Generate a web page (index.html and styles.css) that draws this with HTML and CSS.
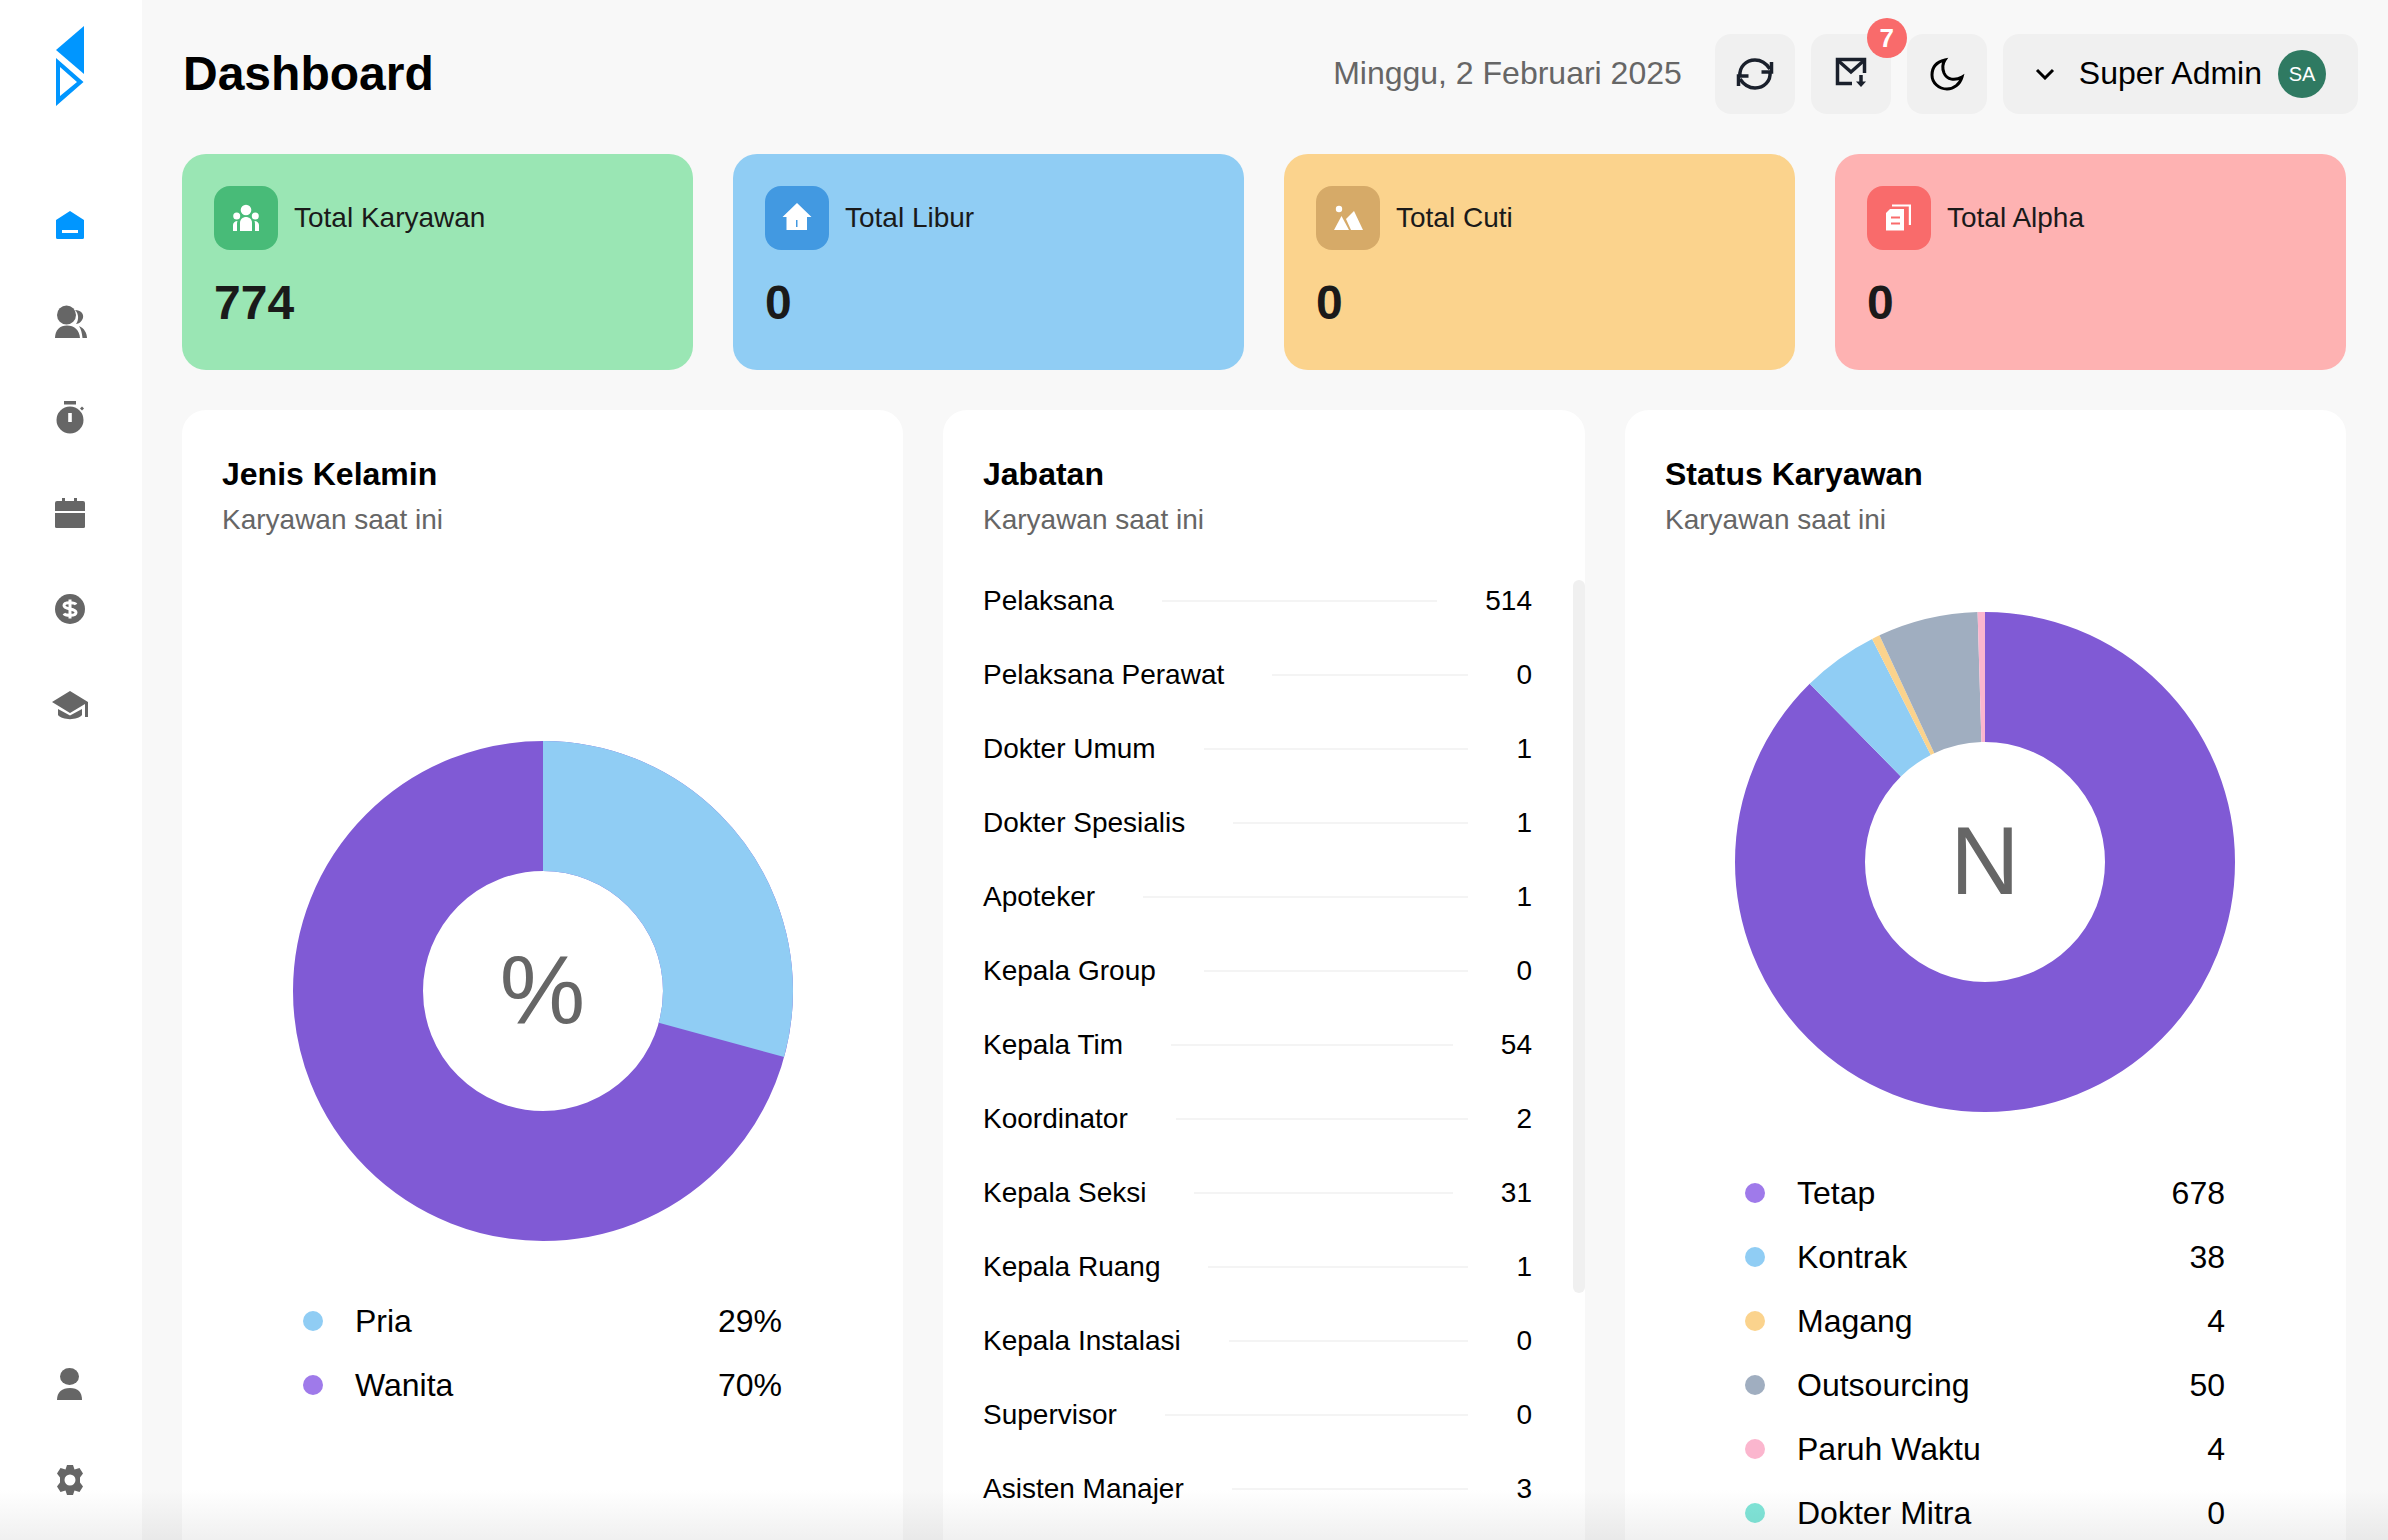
FILE: index.html
```html
<!DOCTYPE html>
<html lang="en">
  <head>
    <meta charset="UTF-8" />
    <meta name="viewport" content="width=device-width, initial-scale=1.0" />
    <title>Dashboard</title>
    <link rel="stylesheet" href="styles.css">
  </head>
  <body>
    <aside class="sidebar">
      <svg class="logo" viewBox="0 0 40 80">
        <path class="logo-fill" d="M34 0V48L6 24Z" />
        <path class="logo-fill" fill-rule="evenodd" d="M6 32L33.5 56 6 80ZM10 41V70L27 56Z" />
      </svg>

      <nav class="nav">
        <a class="nav-item">
          <svg class="nav-icon active" viewBox="0 0 40 40">
            <path fill-rule="evenodd" d="M20 6L34 15V32.5A1.5 1.5 0 0 1 32.5 34H7.5A1.5 1.5 0 0 1 6 32.5V15ZM12 25V28H28V25Z" />
          </svg>
        </a>
        <a class="nav-item">
          <svg class="nav-icon" viewBox="0 0 40 40">
            <ellipse cx="16.5" cy="14" rx="9.5" ry="9.5" />
            <path d="M5 37C5 29 10 24.5 17 24.5C24 24.5 29.5 29 30 37Z" />
            <path d="M25 9C31 9 34 13 33 17C32 20 29 23 26 23C29 19 29 13 25 9Z" />
            <path d="M29 25C34 27 37 32 37 37H32.5C32 32 31 28 29 25Z" />
          </svg>
        </a>
        <a class="nav-item">
          <svg class="nav-icon" viewBox="0 0 40 40">
            <path fill-rule="evenodd" d="M20 9.5A13.5 13.5 0 1 1 20 36.5A13.5 13.5 0 1 1 20 9.5ZM18.2 16V25H21.8V16Z" />
            <rect x="14" y="4" width="12" height="3.5" />
            <path d="M30 11.5L32 9.5 34 11.5 32 13.5Z" />
          </svg>
        </a>
        <a class="nav-item">
          <svg class="nav-icon" viewBox="0 0 40 40">
            <path d="M5 10A2 2 0 0 1 7 8H12V5H15V8H24V5H27V8H33A2 2 0 0 1 35 10V18H5Z" />
            <path d="M5 20H35V33.5A1.5 1.5 0 0 1 33.5 35H6.5A1.5 1.5 0 0 1 5 33.5Z" />
          </svg>
        </a>
        <a class="nav-item">
          <svg class="nav-icon" viewBox="0 0 40 40">
            <circle cx="20" cy="20" r="15" />
            <path class="cut" d="M26 15.5C25 13.5 14 12.5 14 16.5C14 21 26 19 26 23.5C26 27.5 15 26.5 14 24.5" />
            <path class="cut" d="M20 10.5V29.5" />
          </svg>
        </a>
        <a class="nav-item">
          <svg class="nav-icon" viewBox="0 0 40 40">
            <path d="M2 17L20 6 38 17V32H35V19L20 28Z" />
            <path d="M8 24L20 30.5 32 24V30C28 35.5 12 35.5 8 30Z" />
          </svg>
        </a>
      </nav>

      <div class="nav nav-bottom">
        <a class="nav-item">
          <svg class="nav-icon" viewBox="0 0 40 40">
            <ellipse cx="19.5" cy="12.5" rx="9.5" ry="8.5" />
            <path d="M7 36C7 28 12 24 20 24C28 24 32 28 32 36Z" />
          </svg>
        </a>
        <a class="nav-item">
          <svg class="nav-icon" viewBox="0 0 40 40">
            <path fill-rule="evenodd" d="M17 5H23L24.5 9.5L29.5 8L33 13.5L30 17.5V22.5L33 26.5L29.5 32L24.5 30.5L23 35H17L15.5 30.5L10.5 32L7 26.5L10 22.5V17.5L7 13.5L10.5 8L15.5 9.5ZM20 14.5A5.5 5.5 0 1 0 20 25.5A5.5 5.5 0 1 0 20 14.5Z" />
          </svg>
        </a>
      </div>
    </aside>

    <main class="main">
      <header class="topbar">
        <h1>Dashboard</h1>
        <div class="topbar-right">
          <span class="today">Minggu, 2 Februari 2025</span>
          <button class="icon-btn">
            <svg viewBox="0 0 40 40" class="line-icon">
              <path d="M5 22C4 13 11 6 20 6C26 6 31 9 35 15" />
              <path d="M36.5 8V18H26.5" />
              <path d="M35 18C36 27 29 34 20 34C14 34 9 31 5 25" />
              <path d="M3.5 32V22H13.5" />
            </svg>
          </button>
          <button class="icon-btn">
            <svg viewBox="0 0 40 40" class="line-icon">
              <path d="M21 29.5H6.5V5.5H33.5V19" />
              <path d="M6.5 6L20 18 33.5 6" />
              <path d="M30 21V29" />
              <path class="solid" d="M25 27.5H35L30 33Z" />
            </svg>
            <span class="badge">7</span>
          </button>
          <button class="icon-btn">
            <svg viewBox="0 0 40 40" class="line-icon moon">
              <path d="M18 6C9 8 5 14 5 21C5 29 12 35 20 35C27 35 33 30 35 23C28 27 20 26 17 19C15 14 16 9 18 6Z" />
            </svg>
          </button>
          <button class="user-btn">
            <svg viewBox="0 0 20 12" class="chevron">
              <path d="M2 2L10 10 18 2" />
            </svg>
            <span class="user-name">Super Admin</span>
            <span class="avatar">SA</span>
          </button>
        </div>
      </header>

      <section class="stats">
        <div class="stat stat-green">
          <div class="stat-head">
            <span class="stat-icon">
              <svg viewBox="0 0 32 32">
                <circle cx="16" cy="8" r="5.3" />
                <circle cx="6.7" cy="14" r="3.5" />
                <circle cx="25.3" cy="14" r="3.5" />
                <path d="M10 29V21C10 17 13 15 16 15C19 15 22 17 22 21V29Z" />
                <path d="M3 29V23C3 21 5 19 7.5 19C7 20 7 22 7 23V29Z" />
                <path d="M29 29V23C29 21 27 19 24.5 19C25 20 25 22 25 23V29Z" />
              </svg>
            </span>
            <span class="stat-label">Total Karyawan</span>
          </div>
          <div class="stat-value">774</div>
        </div>
        <div class="stat stat-blue">
          <div class="stat-head">
            <span class="stat-icon">
              <svg viewBox="0 0 32 32">
                <path fill-rule="evenodd" d="M16 1L30.5 15H26V28H5.5V15H1.5ZM15 18V25H16.5V18Z" />
              </svg>
            </span>
            <span class="stat-label">Total Libur</span>
          </div>
          <div class="stat-value">0</div>
        </div>
        <div class="stat stat-orange">
          <div class="stat-head">
            <span class="stat-icon">
              <svg viewBox="0 0 32 32">
                <circle cx="7" cy="7" r="3.2" />
                <path d="M9.5 14L17 28H2Z" />
                <path d="M22 9L31 28H19L14 17Z" />
              </svg>
            </span>
            <span class="stat-label">Total Cuti</span>
          </div>
          <div class="stat-value">0</div>
        </div>
        <div class="stat stat-red">
          <div class="stat-head">
            <span class="stat-icon">
              <svg viewBox="0 0 32 32">
                <path fill-rule="evenodd" d="M3 11L7 7H21V28.5H3ZM8 14.5V16.5H17V14.5ZM8 20.5V22.5H17V20.5Z" />
                <path d="M9 2.5H28V23H25.8V4.5H9Z" />
              </svg>
            </span>
            <span class="stat-label">Total Alpha</span>
          </div>
          <div class="stat-value">0</div>
        </div>
      </section>

      <section class="panels">
        <div class="panel">
          <h2>Jenis Kelamin</h2>
          <p class="panel-sub">Karyawan saat ini</p>
          <div class="donut donut-gender">
            <svg viewBox="0 0 500 500">
              <circle class="ring" cx="250" cy="250" r="185" stroke="#805ad5" />
              <circle class="ring" cx="250" cy="250" r="185" stroke="#90cdf4" stroke-dasharray="340 1162.39" transform="rotate(-90 250 250)" />
            </svg>
            <span class="donut-label">%</span>
          </div>
          <ul class="legend">
            <li><i class="dot dot-blue"></i><span class="legend-name">Pria</span><span>29%</span></li>
            <li><i class="dot dot-purple"></i><span class="legend-name">Wanita</span><span>70%</span></li>
          </ul>
        </div>

        <div class="panel panel-list">
          <h2>Jabatan</h2>
          <p class="panel-sub">Karyawan saat ini</p>
          <ul class="rows">
            <li><span>Pelaksana</span><i></i><span>514</span></li>
            <li><span>Pelaksana Perawat</span><i></i><span>0</span></li>
            <li><span>Dokter Umum</span><i></i><span>1</span></li>
            <li><span>Dokter Spesialis</span><i></i><span>1</span></li>
            <li><span>Apoteker</span><i></i><span>1</span></li>
            <li><span>Kepala Group</span><i></i><span>0</span></li>
            <li><span>Kepala Tim</span><i></i><span>54</span></li>
            <li><span>Koordinator</span><i></i><span>2</span></li>
            <li><span>Kepala Seksi</span><i></i><span>31</span></li>
            <li><span>Kepala Ruang</span><i></i><span>1</span></li>
            <li><span>Kepala Instalasi</span><i></i><span>0</span></li>
            <li><span>Supervisor</span><i></i><span>0</span></li>
            <li><span>Asisten Manajer</span><i></i><span>3</span></li>
          </ul>
          <div class="scroll-thumb"></div>
        </div>

        <div class="panel">
          <h2>Status Karyawan</h2>
          <p class="panel-sub">Karyawan saat ini</p>
          <div class="donut donut-status">
            <svg viewBox="0 0 500 500">
              <g transform="rotate(-90 250 250)">
                <circle class="ring" cx="250" cy="250" r="185" stroke="#805ad5" stroke-dasharray="1018.2 1162.39" />
                <circle class="ring" cx="250" cy="250" r="185" stroke="#90cdf4" stroke-dasharray="57.07 1162.39" stroke-dashoffset="-1018.2" />
                <circle class="ring" cx="250" cy="250" r="185" stroke="#fbd38d" stroke-dasharray="6.01 1162.39" stroke-dashoffset="-1075.27" />
                <circle class="ring" cx="250" cy="250" r="185" stroke="#a0aec0" stroke-dasharray="75.09 1162.39" stroke-dashoffset="-1081.28" />
                <circle class="ring" cx="250" cy="250" r="185" stroke="#fbb6ce" stroke-dasharray="6.02 1162.39" stroke-dashoffset="-1156.37" />
              </g>
            </svg>
            <span class="donut-label">N</span>
          </div>
          <ul class="legend legend-status">
            <li><i class="dot dot-purple"></i><span class="legend-name">Tetap</span><span>678</span></li>
            <li><i class="dot dot-blue"></i><span class="legend-name">Kontrak</span><span>38</span></li>
            <li><i class="dot dot-orange"></i><span class="legend-name">Magang</span><span>4</span></li>
            <li><i class="dot dot-gray"></i><span class="legend-name">Outsourcing</span><span>50</span></li>
            <li><i class="dot dot-pink"></i><span class="legend-name">Paruh Waktu</span><span>4</span></li>
            <li><i class="dot dot-teal"></i><span class="legend-name">Dokter Mitra</span><span>0</span></li>
          </ul>
        </div>
      </section>
    </main>

    <div class="bottom-fade"></div>
  </body>
</html>
```

FILE: styles.css
```css
* {
  box-sizing: border-box;
}

html,
body {
  height: 100%;
}

body {
  display: flex;
  margin: 0;
  overflow: hidden;
  font-family: "Liberation Sans", Arial, sans-serif;
  background-color: #f8f8f8;
  color: #000;
}

ul {
  margin: 0;
  padding: 0;
  list-style: none;
}

/* sidebar */
.sidebar {
  display: flex;
  flex-direction: column;
  align-items: center;
  flex: 0 0 142px;
  height: 100%;
  padding: 26px 2px 12px 0;
  background-color: #fff;
}

.logo {
  display: block;
  width: 40px;
  height: 80px;
}

.logo-fill {
  fill: #0096ff;
}

.nav {
  display: flex;
  flex-direction: column;
  margin-top: 71px;
}

.nav-bottom {
  margin-top: auto;
}

.nav-item {
  display: flex;
  align-items: center;
  justify-content: center;
  height: 96px;
}

.nav-icon {
  display: block;
  width: 40px;
  height: 40px;
  fill: #666;
}

.nav-icon.active {
  fill: #0096ff;
}

.nav-icon .cut {
  fill: none;
  stroke: #fff;
  stroke-width: 3;
}

/* main */
.main {
  flex: 1;
  min-width: 0;
  padding: 0 30px 0 40px;
}

.topbar {
  display: flex;
  align-items: center;
  justify-content: space-between;
  height: 154px;
  padding-bottom: 7px;
  padding-left: 1px;
}

h1 {
  margin: 0;
  font-size: 48px;
  font-weight: 700;
  color: #000;
}

.topbar-right {
  display: flex;
  align-items: center;
  gap: 16px;
}

.today {
  margin-right: 17px;
  font-size: 32px;
  color: #666;
}

.icon-btn {
  position: relative;
  display: flex;
  align-items: center;
  justify-content: center;
  width: 80px;
  height: 80px;
  padding: 0;
  border: 0;
  border-radius: 16px;
  background-color: #f0f0f0;
}

.line-icon {
  width: 40px;
  height: 40px;
  fill: none;
  stroke: #1a202c;
  stroke-width: 3.5;
}

.line-icon .solid {
  fill: #1a202c;
  stroke: none;
}

.line-icon.moon {
  stroke: #000;
  stroke-width: 3;
}

.badge {
  position: absolute;
  top: -16px;
  right: -16px;
  width: 40px;
  height: 40px;
  border-radius: 50%;
  background-color: #f96b6b;
  color: #fff;
  font-family: "Liberation Sans", Arial, sans-serif;
  font-size: 26px;
  font-weight: 700;
  line-height: 40px;
  text-align: center;
}

.user-btn {
  display: flex;
  align-items: center;
  height: 80px;
  padding: 0 32px;
  border: 0;
  border-radius: 16px;
  background-color: #f0f0f0;
  font-family: "Liberation Sans", Arial, sans-serif;
}

.chevron {
  width: 20px;
  height: 12px;
  fill: none;
  stroke: #000;
  stroke-width: 3;
}

.user-name {
  margin: 0 16px 0 24px;
  font-size: 32px;
  color: #000;
}

.avatar {
  width: 48px;
  height: 48px;
  border-radius: 50%;
  background-color: #2f7a62;
  color: #fff;
  font-size: 20px;
  line-height: 48px;
  text-align: center;
}

/* stat cards */
.stats {
  display: grid;
  grid-template-columns: repeat(4, 1fr);
  gap: 40px;
  width: 2164px;
}

.stat {
  height: 216px;
  padding: 32px;
  border-radius: 24px;
}

.stat-green {
  background-color: #9ae6b4;
}

.stat-blue {
  background-color: #90cdf4;
}

.stat-orange {
  background-color: #fbd38d;
}

.stat-red {
  background-color: #feb2b2;
}

.stat-head {
  display: flex;
  align-items: center;
  gap: 16px;
}

.stat-icon {
  display: flex;
  align-items: center;
  justify-content: center;
  width: 64px;
  height: 64px;
  border-radius: 16px;
}

.stat-icon svg {
  width: 32px;
  height: 32px;
  fill: #fff;
}

.stat-green .stat-icon {
  background-color: #48bb78;
}

.stat-blue .stat-icon {
  background-color: #4299e1;
}

.stat-orange .stat-icon {
  background-color: #d6aa68;
}

.stat-red .stat-icon {
  background-color: #f96b6b;
}

.stat-label {
  font-size: 28px;
  color: #1a1a1a;
}

.stat-value {
  margin-top: 25px;
  font-size: 48px;
  font-weight: 700;
  line-height: 56px;
  color: #1a1a1a;
}

/* panels */
.panels {
  display: grid;
  grid-template-columns: 721px 642px 721px;
  gap: 40px;
  width: 2164px;
  margin-top: 40px;
}

.panel {
  position: relative;
  height: 1300px;
  padding: 44px 40px 0;
  border-radius: 24px;
  background-color: #fff;
}

h2 {
  margin: 0;
  font-size: 32px;
  font-weight: 700;
  line-height: 40px;
}

.panel-sub {
  margin: 6px 0 0;
  font-size: 28px;
  line-height: 40px;
  color: #666;
}

.donut {
  position: relative;
  width: 500px;
  margin: 0 auto;
}

.donut svg {
  display: block;
  width: 500px;
  height: 500px;
}

.donut-gender {
  margin-top: 201px;
}

.donut-status {
  margin-top: 72px;
  margin-left: 70px;
}

.ring {
  fill: none;
  stroke-width: 130;
}

.donut-label {
  position: absolute;
  top: 0;
  left: 0;
  width: 500px;
  font-size: 96px;
  line-height: 497px;
  text-align: center;
  color: #666;
}

.legend {
  width: 479px;
  margin: 48px 0 0 81px;
  font-size: 32px;
}

.legend-status {
  margin: 49px 0 0 80px;
  width: 480px;
}

.legend li {
  display: flex;
  align-items: center;
  height: 64px;
}

.legend-name {
  flex: 1;
}

.dot {
  width: 20px;
  height: 20px;
  margin-right: 32px;
  border-radius: 50%;
}

.dot-purple {
  background-color: #9f7aea;
}

.dot-blue {
  background-color: #90cdf4;
}

.dot-orange {
  background-color: #fbd38d;
}

.dot-gray {
  background-color: #a0aec0;
}

.dot-pink {
  background-color: #fbb6ce;
}

.dot-teal {
  background-color: #81e6d9;
}

.rows {
  width: 549px;
  margin-top: 24px;
  font-size: 28px;
}

.rows li {
  display: flex;
  align-items: center;
  gap: 48px;
  height: 74px;
}

.rows i {
  flex: 1;
  height: 2px;
  background-color: #f4f4f4;
}

.scroll-thumb {
  position: absolute;
  top: 170px;
  right: 0;
  width: 12px;
  height: 713px;
  border-radius: 6px;
  background-color: #f0f0f0;
}

/* grey fade at the bottom edge of the window, text stays dark through multiply */
.bottom-fade {
  position: fixed;
  right: 0;
  bottom: 0;
  left: 0;
  height: 50px;
  background: linear-gradient(#fff, #f0f0f0);
  mix-blend-mode: multiply;
  pointer-events: none;
}
```
